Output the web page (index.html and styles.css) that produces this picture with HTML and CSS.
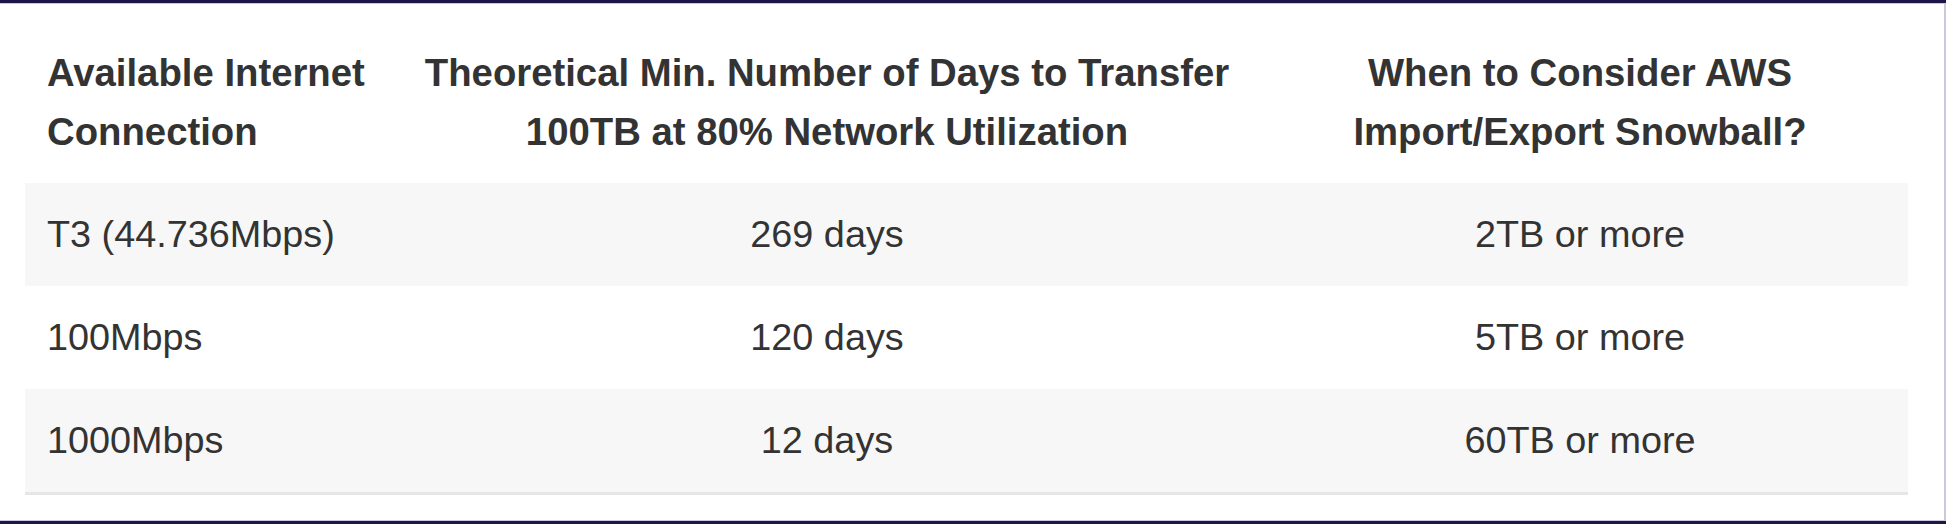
FILE: index.html
```html
<!DOCTYPE html>
<html lang="en">
<head>
<meta charset="utf-8">
<title>AWS Import/Export Snowball</title>
<link rel="stylesheet" href="styles.css">
</head>
<body>
<div class="frame">
  <div class="inner">
    <table class="data">
      <colgroup>
        <col class="c1">
        <col class="c2">
        <col class="c3">
      </colgroup>
      <thead>
        <tr>
          <th class="left">Available Internet Connection</th>
          <th>Theoretical Min. Number of Days to Transfer 100TB at 80% Network Utilization</th>
          <th>When to Consider AWS Import/Export Snowball?</th>
        </tr>
      </thead>
      <tbody>
        <tr class="odd">
          <td class="left">T3 (44.736Mbps)</td>
          <td>269 days</td>
          <td>2TB or more</td>
        </tr>
        <tr>
          <td class="left">100Mbps</td>
          <td>120 days</td>
          <td>5TB or more</td>
        </tr>
        <tr class="odd last">
          <td class="left">1000Mbps</td>
          <td>12 days</td>
          <td>60TB or more</td>
        </tr>
      </tbody>
    </table>
  </div>
</div>
</body>
</html>
```

FILE: styles.css
```css
html, body {
  margin: 0;
  padding: 0;
  background: #ffffff;
}

body {
  width: 1946px;
  height: 524px;
  overflow: hidden;
  font-family: "Liberation Sans", Arial, Helvetica, sans-serif;
  color: #333333;
}

.frame {
  box-sizing: border-box;
  width: 1946px;
  height: 524px;
  border-top: 3px solid #1c1646;
  border-bottom: 3px solid #1c1646;
}

.inner {
  box-sizing: border-box;
  height: 100%;
  border-top: 1px solid #cbc7de;
  border-bottom: 1px solid #cbc7de;
  border-right: 2px solid #cbc7de;
  padding-left: 25px;
}

.data {
  table-layout: fixed;
  border-collapse: collapse;
  border-spacing: 0;
  width: 1883px;
  font-size: 37.8px;
  line-height: 59px;
}

.c1 { width: 377px; }
.c2 { width: 850px; }
.c3 { width: 656px; }

.data th {
  font-size: 38.3px;
  font-weight: bold;
  text-align: center;
  padding: 39px 18px 22px 18px;
  vertical-align: bottom;
}

.data th.left {
  padding-left: 22px;
}

.data td {
  font-weight: normal;
  text-align: center;
  padding: 22px 22px;
  white-space: nowrap;
}

.data .left {
  text-align: left;
}

.data tr.odd td {
  background: #f7f7f8;
}

.data tr.last td {
  border-bottom: 3px solid #e6e6e8;
}
```
